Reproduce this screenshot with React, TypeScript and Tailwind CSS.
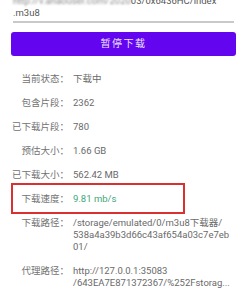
import React from "react";

const font = { fontFamily: '"Roboto", "Noto Sans CJK SC", sans-serif' };

function Row({ label, children, valueClass = "text-[#6a6a6a]" }: { label: string; children: React.ReactNode; valueClass?: string }) {
  return (
    <div className="flex items-start leading-[12px] text-[9.5px]">
      <div className="w-[58px] shrink-0 text-right text-[#727272]">{label}</div>
      <div className={"ml-[4px] " + valueClass}>{children}</div>
    </div>
  );
}

export default function App() {
  return (
    <div className="relative w-[247px] h-[296px] overflow-hidden bg-white" style={font}>
      <div className="px-[11px]">
        <div className="-mt-[5px] pl-[2px] text-[9.5px] leading-[12px] text-[#575757] whitespace-nowrap">
          <div>
            <span className="blur-[1.2px] text-[#8a8a8a]">http://v.ahaouser.com/2020</span>
            <span>03/0x6436HC/index</span>
          </div>
          <div>.m3u8</div>
        </div>
        <div className="mt-[2px] mx-[2px] h-[1.5px] bg-[#c9c9c9]" />
        <button className="mt-[9px] w-full h-[24px] rounded-[3px] bg-[#6405f0] text-[#ece3ff] text-[10px] tracking-[1.5px] flex items-center justify-center">
          暂停下载
        </button>
        <div className="mt-[17px] flex flex-col gap-[12px]">
          <Row label="当前状态：">下载中</Row>
          <Row label="包含片段：">2362</Row>
          <Row label="已下载片段：">780</Row>
          <Row label="预估大小：">1.66 GB</Row>
          <Row label="已下载大小：">562.42 MB</Row>
          <Row label="下载速度：" valueClass="text-[#3fa67a]">9.81 mb/s</Row>
          <Row label="下载路径：">
            <div>/storage/emulated/0/m3u8下载器/</div>
            <div>538a4a39b3d66c43af654a03c7e7eb</div>
            <div>01/</div>
          </Row>
          <Row label="代理路径：">
            <div>http://127.0.0.1:35083</div>
            <div>/643EA7E871372367/%252Fstorag...</div>
          </Row>
        </div>
      </div>
      <div className="absolute left-[11px] top-[183px] w-[174px] h-[31px] border-2 border-[#d8312f]" />
    </div>
  );
}
